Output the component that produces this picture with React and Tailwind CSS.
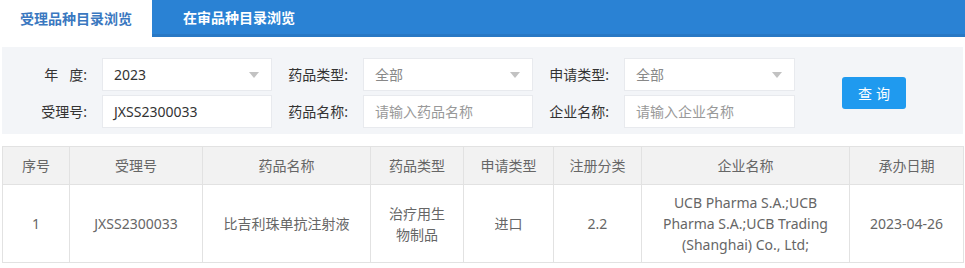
import React from 'react';

const font = { fontFamily: '"Noto Sans", "Noto Sans CJK SC", sans-serif' };

const columns = [
  { label: '序号', w: 'w-[67px]' },
  { label: '受理号', w: 'w-[133px]' },
  { label: '药品名称', w: 'w-[168px]' },
  { label: '药品类型', w: 'w-[93px]' },
  { label: '申请类型', w: 'w-[90px]' },
  { label: '注册分类', w: 'w-[88px]' },
  { label: '企业名称', w: 'w-[208px]' },
  { label: '承办日期', w: 'w-[114px]' },
];

const rows = [
  ['1', 'JXSS2300033', '比吉利珠单抗注射液', '治疗用生物制品', '进口', '2.2', 'UCB Pharma S.A.;UCB Pharma S.A.;UCB Trading (Shanghai) Co., Ltd;', '2023-04-26'],
];

const Label = ({ children }) => (
  <div className="flex items-center justify-end pr-[15px] text-[14px] text-[#333] whitespace-pre">{children}</div>
);

const Select = ({ value }) => (
  <div className="h-[33px] bg-white border border-[#e8eaee] flex items-center justify-between pl-[11px] pr-[12px]">
    <span className={`text-[14px] ${value === '全部' ? 'text-[#888]' : 'text-[#333]'}`}>{value}</span>
    <span className="w-0 h-0 border-l-[5px] border-r-[5px] border-t-[6px] border-l-transparent border-r-transparent border-t-[#c2c2c2]" />
  </div>
);

const Input = ({ value, placeholder }) => (
  <div className="h-[33px] bg-white border border-[#e8eaee] flex items-center pl-[11px]">
    {value
      ? <span className="text-[14px] text-[#333]">{value}</span>
      : <span className="text-[14px] text-[#999]">{placeholder}</span>}
  </div>
);

const App = () => {
  return (
    <div className="w-[965px] h-[268px] bg-white overflow-hidden" style={font}>
      {/* Tabs */}
      <div className="h-[37px] bg-[#2a82d4] flex border-b-[3px] border-[#2878c4]">
        <div className="w-[152px] h-[37px] bg-white flex items-center justify-center text-[14px] font-bold text-[#3a78c0]">
          受理品种目录浏览
        </div>
        <div className="pl-[31px] flex items-center text-[14px] font-bold text-white">在审品种目录浏览</div>
      </div>

      {/* Filter panel */}
      <div className="mx-[2px] mt-[10px] bg-[#f3f5f8] pt-[11px] pb-[6px] pl-[9px] flex items-center">
        <div className="grid grid-cols-[91px_170px_91px_170px_91px_171px] gap-y-[4px]">
          <Label>年   度:</Label>
          <Select value="2023" />
          <Label>药品类型:</Label>
          <Select value="全部" />
          <Label>申请类型:</Label>
          <Select value="全部" />
          <Label>受理号:</Label>
          <Input value="JXSS2300033" />
          <Label>药品名称:</Label>
          <Input placeholder="请输入药品名称" />
          <Label>企业名称:</Label>
          <Input placeholder="请输入企业名称" />
        </div>
        <button className="ml-[47px] w-[64px] h-[32px] bg-[#1f9aef] rounded-[3px] text-white text-[14px] tracking-[4px] pl-[4px]">
          查询
        </button>
      </div>

      {/* Table */}
      <table className="ml-[2px] mt-[12px] table-fixed border-collapse text-[14px] text-[#666]">
        <thead>
          <tr className="h-[38px] bg-[#f2f2f2]">
            {columns.map(c => (
              <th key={c.label} className={`${c.w} border border-[#e2e2e2] font-normal text-center`}>{c.label}</th>
            ))}
          </tr>
        </thead>
        <tbody>
          {rows.map((r, i) => (
            <tr key={i} className="h-[78px]">
              {r.map((cell, j) => (
                <td key={j} className={`border border-[#e2e2e2] text-center leading-[21px] ${j === 3 ? 'px-[13px]' : 'px-[14px]'}`}>{cell}</td>
              ))}
            </tr>
          ))}
        </tbody>
      </table>
    </div>
  );
};

export default App;
